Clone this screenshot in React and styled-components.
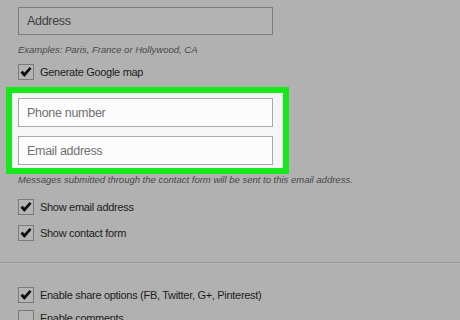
import React from "react";
import styled, { createGlobalStyle } from "styled-components";

const Global = createGlobalStyle`
  html, body { margin: 0; padding: 0; background: #b1b1b1; overflow: hidden; }
  body { font-family: "Liberation Sans", Arial, sans-serif; }
  * { box-sizing: border-box; }
`;

const Page = styled.div`
  width: 460px;
  background: #b1b1b1;
  padding: 7px 0 0 18px;
  display: flex;
  flex-direction: column;
  & > * { flex-shrink: 0; }
`;

const Field = styled.input`
  display: block;
  flex-shrink: 0;
  width: 255px;
  height: ${(p) => (p.$tall ? 28 : 29)}px;
  margin: 0;
  padding: 0 0 0 8px;
  border: 1px solid ${(p) => (p.$light ? "#a9a9a9" : "#7c7c7c")};
  background: ${(p) => (p.$light ? "#fcfcfc" : "#b3b3b3")};
  font-family: "Liberation Sans", Arial, sans-serif;
  font-size: 12.5px;
  letter-spacing: -0.3px;
  outline: none;
  &::placeholder {
    color: ${(p) => (p.$light ? "#707070" : "#3e3e3e")};
    opacity: 1;
  }
`;

const Hint = styled.div`
  margin-top: ${(p) => p.$mt}px;
  font-size: 9.5px;
  font-style: italic;
  line-height: ${(p) => p.$lh}px;
  color: #484848;
  white-space: nowrap;
`;

const Group = styled.div`
  margin-top: ${(p) => p.$mt}px;
  display: flex;
  flex-direction: column;
  gap: ${(p) => p.$gap}px;
`;

const Row = styled.label`
  display: flex;
  align-items: center;
  gap: 6px;
  height: 16px;
  font-size: 11px;
  letter-spacing: -0.3px;
  color: #1c1c1c;
  white-space: nowrap;
`;

const Box = styled.span`
  width: 16px;
  height: 16px;
  flex: none;
  border: 1px solid #7a7a7a;
  background: #b4b4b4;
  display: flex;
  align-items: center;
  justify-content: center;
`;

const Highlight = styled.div`
  margin-top: 7px;
  margin-left: -12px;
  width: 283px;
  border: 6px solid #16e81a;
  background: #f6f6f6;
  padding: 5px 10px 3px 6px;
  display: flex;
  flex-direction: column;
  gap: 9px;
`;

const Divider = styled.hr`
  margin: 21px 0 0 -18px;
  width: 460px;
  height: 2px;
  border: none;
  border-top: 1px solid #979797;
  border-bottom: 1px solid #b9b9b9;
`;

const Check = () => (
  <svg width="12" height="11" viewBox="0 0 12 11">
    <path d="M1.2 5.6 L4.4 9.2 L10.8 1.6 L9.6 0.8 L4.3 6.6 L2.6 4.4 Z" fill="#0a0a0a" stroke="#0a0a0a" strokeWidth="1.1" strokeLinejoin="round" />
  </svg>
);

const CheckRow = ({ checked, children }) => (
  <Row>
    <Box>{checked && <Check />}</Box>
    <span>{children}</span>
  </Row>
);

export default function App() {
  return (
    <>
      <Global />
      <Page>
        <Field $tall readOnly placeholder="Address" />
        <Hint $mt={8} $lh={14}>Examples: Paris, France or Hollywood, CA</Hint>
        <Group $mt={7} $gap={10}>
          <CheckRow checked>Generate Google map</CheckRow>
        </Group>
        <Highlight>
          <Field $light readOnly placeholder="Phone number" />
          <Field $light readOnly placeholder="Email address" />
        </Highlight>
        <Hint $mt={0} $lh={12}>
          Messages submitted through the contact form will be sent to this email address.
        </Hint>
        <Group $mt={13} $gap={10}>
          <CheckRow checked>Show email address</CheckRow>
          <CheckRow checked>Show contact form</CheckRow>
        </Group>
        <Divider />
        <Group $mt={23} $gap={7}>
          <CheckRow checked>Enable share options (FB, Twitter, G+, Pinterest)</CheckRow>
          <CheckRow>Enable comments</CheckRow>
        </Group>
      </Page>
    </>
  );
}
